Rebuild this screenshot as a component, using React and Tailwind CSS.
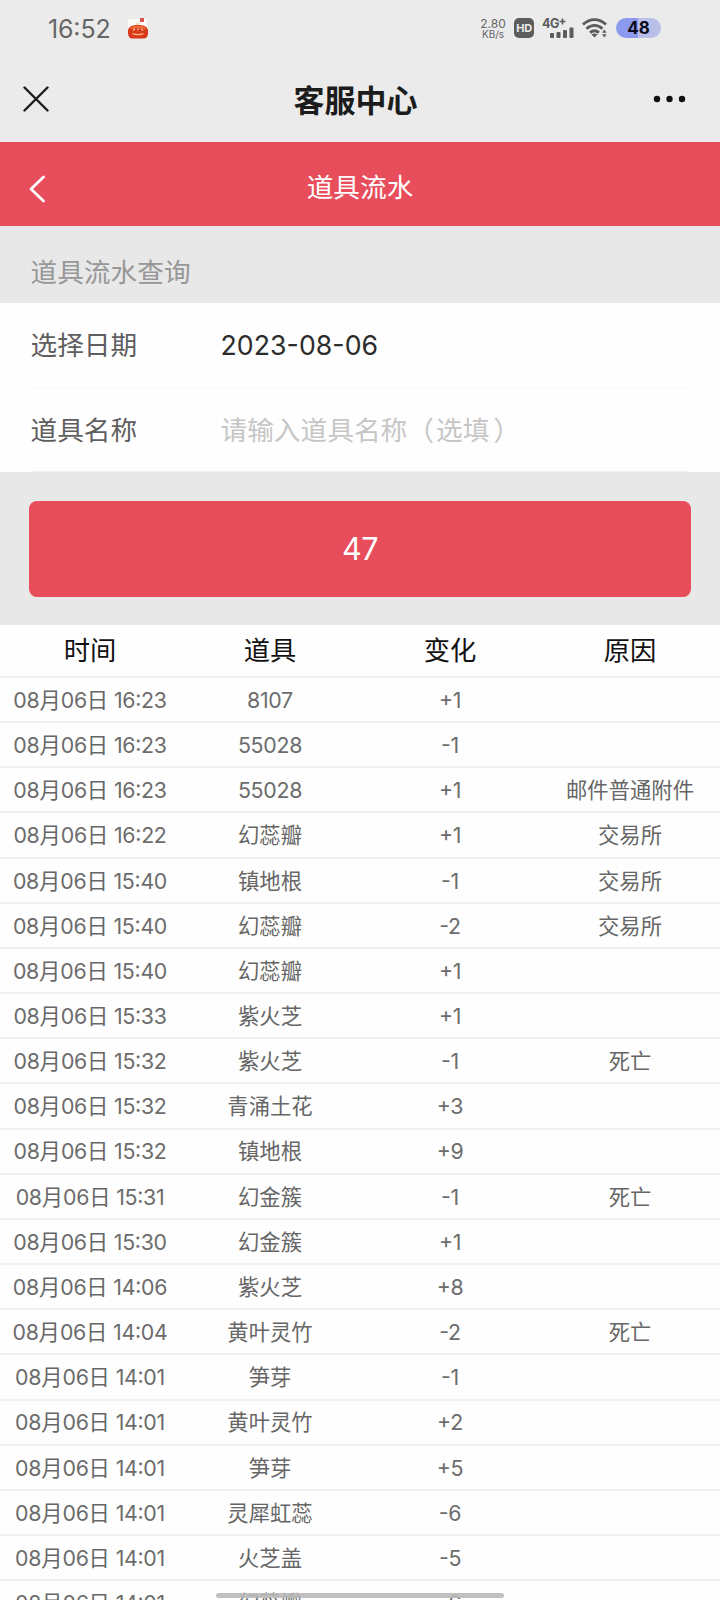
import React from "react";

const rows = [
  ["16:23", "8107", "+1", ""],
  ["16:23", "55028", "-1", ""],
  ["16:23", "55028", "+1", "邮件普通附件"],
  ["16:22", "幻蕊瓣", "+1", "交易所"],
  ["15:40", "镇地根", "-1", "交易所"],
  ["15:40", "幻蕊瓣", "-2", "交易所"],
  ["15:40", "幻蕊瓣", "+1", ""],
  ["15:33", "紫火芝", "+1", ""],
  ["15:32", "紫火芝", "-1", "死亡"],
  ["15:32", "青涌土花", "+3", ""],
  ["15:32", "镇地根", "+9", ""],
  ["15:31", "幻金簇", "-1", "死亡"],
  ["15:30", "幻金簇", "+1", ""],
  ["14:06", "紫火芝", "+8", ""],
  ["14:04", "黄叶灵竹", "-2", "死亡"],
  ["14:01", "笋芽", "-1", ""],
  ["14:01", "黄叶灵竹", "+2", ""],
  ["14:01", "笋芽", "+5", ""],
  ["14:01", "灵犀虹蕊", "-6", ""],
  ["14:01", "火芝盖", "-5", ""],
  ["14:01", "幻蕊瓣", "-6", ""],
];

// Latin runs are set slightly tighter than the Chinese text around them.
function Mixed({ text }) {
  return text.split(/([\u4e00-\u9fff]+)/).filter(Boolean).map((part, i) =>
    /[\u4e00-\u9fff]/.test(part) ? (
      <span key={i}>{part}</span>
    ) : (
      <span key={i} className="tracking-[-0.014em] text-[#6c6c6c] [font-feature-settings:'case']">{part}</span>
    )
  );
}

function StatusBar() {
  return (
    <div className="flex h-[56px] items-center pl-[48px] pr-[59px] text-[#666]">
      <span className="pt-[3px] text-[25px] leading-none tracking-[-0.15px] [font-feature-settings:'case']">16:52</span>
      <svg className="ml-[16px] mt-px" width="22" height="22" viewBox="0 0 22 22">
        <rect x="1" y="1" width="19" height="18" fill="#fbf9f6" />
        <rect x="13" y="0" width="4" height="4" fill="#d9534c" />
        <path d="M9 5h3v3H9z" fill="#f3dcae" />
        <path d="M1 12C2 8 6 7 11 7s9 1 10 5c.5 5-1 8.500-4 8.500H5C2 20.500.500 17 1 12z" fill="#d8391b" />
        <path d="M3.500 10.500c4-2.500 11-2.500 15 0" stroke="#f2703a" strokeWidth="1.800" fill="none" />
        <path d="M6 12.500l2-2M11 10v2.500M16 12.500l-2-2M5.500 15.500c3 1.600 8 1.600 11 0" stroke="#fbc48a" strokeWidth="1.200" fill="none" />
      </svg>
      <div className="ml-auto flex items-center">
        <div className="flex w-[26px] flex-col items-center">
          <span className="text-[12px] leading-[11px]">2.80</span>
          <span className="text-[10px] leading-[10px]">KB/s</span>
        </div>
        <div className="ml-[8px] flex h-5 w-5 items-center justify-center rounded-[5px] bg-[#5c5c5c] text-[11px] font-bold leading-none tracking-[-0.3px] text-[#ececec]">HD</div>
        <svg className="ml-[8px]" width="32" height="22" viewBox="0 0 32 22" fill="#5c5c5c">
          <text x="0" y="10.500" fontSize="12.500" fontWeight="700" fontFamily="Inter, sans-serif" letterSpacing="-0.500">4G</text>
          <path d="M17.500 4.500h6M20.500 1.500v6" stroke="#5c5c5c" strokeWidth="1.700" />
          <rect x="8" y="16" width="4" height="5" rx="1" />
          <rect x="14.500" y="15" width="4" height="6" rx="1" />
          <rect x="21" y="13" width="4" height="8" rx="1" />
          <rect x="27.500" y="10.500" width="4" height="10.500" rx="1" />
        </svg>
        <svg className="ml-[8px]" width="26" height="20" viewBox="0 0 26 20" fill="none" stroke="#5c5c5c" strokeWidth="2.800">
          <path d="M1 6.500C8 0 17 0 24 6.500" />
          <path d="M4.500 10.800c5-4.500 11-4.500 16 0" />
          <path d="M8 14.600c3-2.500 6-2.500 9 0" />
          <path d="M9.500 16.500c2-1.300 4-1.300 6 0l-3 3z" fill="#5c5c5c" stroke="none" />
          <path d="M20 14.800l2.300-3.300 2.300 3.300zM20 16.200l2.300 3.300 2.300-3.300z" fill="#5c5c5c" stroke="none" />
        </svg>
        <div className="ml-[8px] flex h-5 w-[45px] items-center justify-center rounded-full bg-[linear-gradient(90deg,#8b99ee_48%,#b9bfe8_48%)] text-[17px] font-bold leading-none text-[#0a0a18]">48</div>
      </div>
    </div>
  );
}

export default function App() {
  return (
    <div className="h-[1600px] w-[720px] overflow-hidden bg-[#fefefe] font-['Inter','Noto_Sans_CJK_SC',sans-serif]">
      <header className="h-[142px] bg-[#ebebeb]">
        <StatusBar />
        <div className="flex h-[86px] items-center justify-between pl-[23px] pr-[34px]">
          <svg width="26" height="26" viewBox="0 0 26 26" stroke="#1c1c1e" strokeWidth="2.400" strokeLinecap="round">
            <path d="M1.500 1.500l23 23M24.500 1.500l-23 23" />
          </svg>
          <h1 className="pl-[9px] pt-[3px] text-[31px] font-bold leading-none text-[#1c1c1c]">客服中心</h1>
          <svg width="33" height="8" viewBox="0 0 33 8" fill="#111">
            <circle cx="4" cy="4" r="3.200" />
            <circle cx="16.500" cy="4" r="3.200" />
            <circle cx="29" cy="4" r="3.200" />
          </svg>
        </div>
      </header>

      <div className="grid h-[84px] grid-cols-[1fr_auto_1fr] items-center bg-[#e84d5b] pl-[28px] pr-[28px] text-white">
        <svg className="mt-[10px]" width="20" height="30" viewBox="0 0 20 30" fill="none" stroke="currentColor" strokeWidth="2.800" strokeLinecap="round" strokeLinejoin="round">
          <path d="M15.500 3L3 15l12.500 12" />
        </svg>
        <h2 className="mt-[6px] text-[26.700px] leading-none">道具流水</h2>
      </div>

      <div className="flex h-[77px] items-center bg-[#e8e8e8] pl-[30.500px] pt-[15px] text-[26.700px] leading-none text-[#979797]">道具流水查询</div>

      <div className="h-[169px] pl-[30.500px] pr-[31px] text-[26.700px] leading-none">
        <div className="flex h-[86px] items-center border-b border-[#f7f7f7] text-[#5e5e5e]">
          <span className="w-[190px]">选择日期</span>
          <span className="tracking-[0.050px] text-[#2c2c2c] [font-feature-settings:'case']">2023-08-06</span>
        </div>
        <div className="flex h-[83px] items-center border-b border-[#f2f2f2] text-[#5e5e5e]">
          <span className="w-[190px]">道具名称</span>
          <span className="text-[#c6c6c6]">请输入道具名称（<span className="pl-[2px]">选填</span><span className="pl-[4px]">）</span></span>
        </div>
      </div>

      <div className="h-[153px] bg-[#e8e8e8] px-[29px] pt-[29px]">
        <button className="flex h-[96px] w-full items-center justify-center rounded-lg bg-[#e84d5b] pt-px text-[30.500px] font-normal leading-none tracking-[-0.5px] text-white">47</button>
      </div>

      <div className="grid h-[53px] grid-cols-4 items-center border-b-2 border-[#f1f1f1] pt-[2px] text-center text-[26.300px] leading-none text-[#111]">
        <span>时间</span>
        <span>道具</span>
        <span>变化</span>
        <span>原因</span>
      </div>
      {rows.map(([time, item, change, reason], i) => (
        <div key={i} className="grid h-[45.170px] grid-cols-4 items-center whitespace-nowrap border-b-2 border-[#f1f1f1] pt-[2px] text-center text-[21.330px] leading-none text-[#666]">
          <span><Mixed text={"08月06日 " + time} /></span>
          <span><Mixed text={item} /></span>
          <span><Mixed text={change} /></span>
          <span>{reason}</span>
        </div>
      ))}
      <div className="fixed left-[216px] top-[1593px] h-[5px] w-[288px] rounded-full bg-[#b9b9b9]/90" />
    </div>
  );
}
